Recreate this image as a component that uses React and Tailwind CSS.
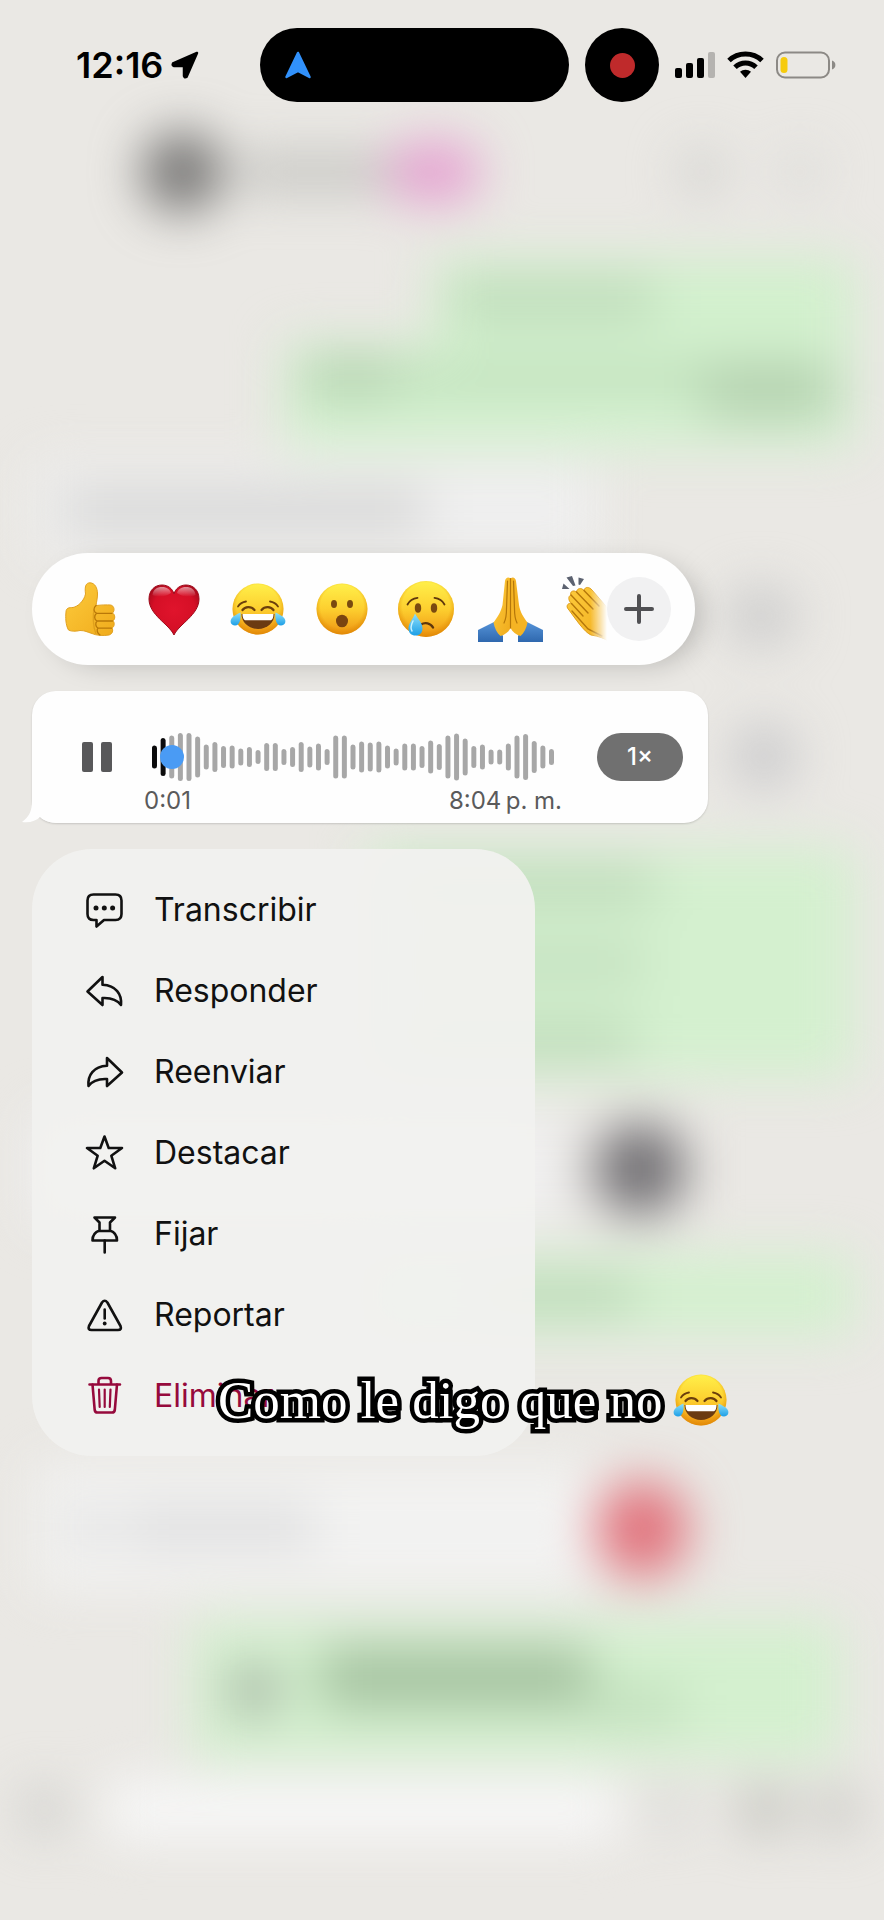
import React, { useState } from "react";

const WAVE = [
  23, 38, 43, 48, 48, 41, 25, 30, 22, 23, 17, 20, 14, 28, 28, 16, 20, 30, 21, 27,
  16, 43, 43, 25, 31, 29, 31, 23, 17, 27, 27, 22, 33, 26, 43, 47, 37, 22, 25, 15,
  15, 27, 43, 46, 32, 23, 16,
];

function EmojiDefs() {
  return (
    <svg width="0" height="0" className="absolute" aria-hidden="true">
      <defs>
        <linearGradient id="face" x1="0" y1="0" x2="0" y2="1">
          <stop offset="0" stopColor="#fff04a" />
          <stop offset="0.5" stopColor="#fdcf2f" />
          <stop offset="1" stopColor="#ee9412" />
        </linearGradient>
        <radialGradient id="rim" cx="0.5" cy="0.45" r="0.56">
          <stop offset="0.75" stopColor="#e08a00" stopOpacity="0" />
          <stop offset="1" stopColor="#d98200" stopOpacity="0.7" />
        </radialGradient>
        <linearGradient id="tear" x1="0" y1="0" x2="0" y2="1">
          <stop offset="0" stopColor="#8fe0fb" />
          <stop offset="1" stopColor="#1d9fe6" />
        </linearGradient>
        <radialGradient id="heart" cx="0.5" cy="0.5" r="0.6">
          <stop offset="0" stopColor="#e0142c" />
          <stop offset="0.7" stopColor="#d50f26" />
          <stop offset="1" stopColor="#a80a1c" />
        </radialGradient>
        <linearGradient id="shine" x1="0" y1="0" x2="0" y2="1">
          <stop offset="0" stopColor="#fff" stopOpacity="0.55" />
          <stop offset="1" stopColor="#fff" stopOpacity="0" />
        </linearGradient>
        <linearGradient id="skin" x1="0" y1="0" x2="1" y2="1">
          <stop offset="0" stopColor="#fdcb3c" />
          <stop offset="1" stopColor="#f0ab1c" />
        </linearGradient>
        <linearGradient id="sleeve" x1="0" y1="0" x2="0" y2="1">
          <stop offset="0" stopColor="#5593d8" />
          <stop offset="1" stopColor="#2f68ae" />
        </linearGradient>
      </defs>
    </svg>
  );
}

function Face({ r = 25.5 }) {
  return (
    <>
      <circle cx="34" cy="34" r={r} fill="url(#face)" />
      <circle cx="34" cy="34" r={r} fill="url(#rim)" />
    </>
  );
}

function ThumbsUp() {
  return (
    <>
      <path
        d="M10 37C10 33 13 32.500 17 32.500C22 31.500 28 26 29.500 19C28.500 11 30 7.800 34 7.800C39 8 41.500 13 41.500 19C41.500 23 40.500 27 40 30.500C45 30 51 29.700 54.500 30C58.500 30.600 59 36 56.500 38C59.500 39.500 59.300 44.500 57 45.800C59 47.500 58.500 52 56 53C57.500 55.500 56.500 59 53 60C48 61 40 60.500 36 58.500C31 57 29 55.500 24 55.500C20 56.500 15 56.500 12.500 55C9.500 50 9.500 42 10 37Z"
        fill="url(#skin)"
        stroke="#e0a020"
        strokeWidth="1"
      />
      <path
        d="M40 30.500C37 33 37.500 37 40.500 38.300H56M40.500 38.300C38 40.500 38 44.500 41 46H56.500M41 46C39 48 39.500 52 42 53.200H55.500M42 53.200C40.500 55 41 58 44 60"
        fill="none"
        stroke="#b97808"
        strokeWidth="1.300"
        strokeLinecap="round"
      />
      <path d="M38.500 33C36.500 40 37 52 40 59" fill="none" stroke="#c98a12" strokeWidth="1.300" opacity="0.5" />
    </>
  );
}

function Heart() {
  return (
    <>
      <path
        d="M34 60C29 49 9 40 9 24C9 15 15 10 22 10C28 10 32.500 13.500 34 19C35.500 13.500 40 10 46 10C53 10 59 15 59 24C59 40 39 49 34 60Z"
        fill="url(#heart)"
        stroke="#9c0a1a"
        strokeWidth="1"
      />
      <path d="M12.500 20C13 14.500 17 12 22 12C27 12 30 14.500 31 18C26 22 17 23 12.500 20Z" fill="url(#shine)" />
      <path d="M37 18C38 14.500 41 12 46 12C51 12 55 14.500 55.500 20C51 23 42 22 37 18Z" fill="url(#shine)" />
    </>
  );
}

function Joy() {
  return (
    <>
      <Face />
      <g fill="none" stroke="#6b3e0c" strokeLinecap="round">
        <path d="M14 31.500C16 28.500 18.500 27 22 26.500" strokeWidth="1.800" />
        <path d="M54 31.500C52 28.500 49.500 27 46 26.500" strokeWidth="1.800" />
        <path d="M18.500 35C21 31.500 27 31 30.500 35" strokeWidth="2.200" />
        <path d="M49.500 35C47 31.500 41 31 37.500 35" strokeWidth="2.200" />
      </g>
      <path d="M17.500 39H50.500C50.500 47.500 43 54 34 54C25 54 17.500 47.500 17.500 39Z" fill="#6b3b12" />
      <path d="M18.500 39H49.500C49.500 42.500 48.500 44.500 47 45.300H21C19.500 44.500 18.500 42.500 18.500 39Z" fill="#fff" />
      <path d="M16.500 37.500C17 44 16 50.500 11 50.500C7 50.500 5.500 46.500 7.500 43.500C9.500 40.500 13 39.500 16.500 37.500Z" fill="url(#tear)" />
      <path d="M51.500 37.500C51 44 52 50.500 57 50.500C61 50.500 62.500 46.500 60.500 43.500C58.500 40.500 55 39.500 51.500 37.500Z" fill="url(#tear)" />
    </>
  );
}

function Wow() {
  return (
    <>
      <Face />
      <ellipse cx="26" cy="29" rx="3" ry="4" fill="#7a4a10" />
      <ellipse cx="42" cy="29" rx="3" ry="4" fill="#7a4a10" />
      <ellipse cx="34" cy="46" rx="6" ry="6.300" fill="#7a4410" />
    </>
  );
}

function Cry() {
  return (
    <>
      <Face r={28} />
      <ellipse cx="26" cy="33" rx="3.200" ry="4.800" fill="#7a4a10" />
      <ellipse cx="42" cy="33" rx="3.200" ry="4.800" fill="#7a4a10" />
      <g fill="none" stroke="#5e370c" strokeLinecap="round">
        <path d="M15.500 29.500C17.500 25.500 21 23.300 25.500 22.800" strokeWidth="1.800" />
        <path d="M52.500 29.500C50.500 25.500 47 23.300 42.500 22.800" strokeWidth="1.800" />
        <path d="M29 49.500C33 47 38.500 48 41 52.500" strokeWidth="2.400" />
      </g>
      <path d="M23 38.500C26 44 30.500 48 30.500 53.500C30.500 58 27.500 60.500 23.500 60.500C19.500 60.500 16.500 58 16.500 53.500C16.500 48 21 44 23 38.500Z" fill="url(#tear)" />
      <path d="M21 46C19 50 18 53 20 56" fill="none" stroke="#c9f2ff" strokeWidth="1.500" strokeLinecap="round" />
    </>
  );
}

function Pray() {
  return (
    <>
      <path d="M2 55L18 47L27 61V67H2Z" fill="url(#sleeve)" />
      <path d="M67 55L51 47L42 61V67H67Z" fill="url(#sleeve)" />
      <path d="M34.500 3.500C32 1.500 29.500 3 29 6L26.500 30C25 37 21 43 17.500 47.500C18.500 53 21 58 24.500 61C29 59.500 32.500 57 34.500 53Z" fill="url(#skin)" />
      <path d="M34.500 3.500C37 1.500 39.500 3 40 6L43 30C44 37 48 43 51.500 47.500C50.500 53 48 58 44.500 61C40 59.500 36.500 57 34.500 53Z" fill="#f5b424" />
      <path d="M34.500 3.500V53M31.500 6L30.500 34C30.500 40 30 44 28 48M37.500 6L38.500 34C38.500 40 39 44 41 48" fill="none" stroke="#b5770a" strokeWidth="1.200" strokeLinecap="round" />
    </>
  );
}

function Clap() {
  return (
    <>
      <path d="M2 14L3.500 8.500L9.500 14ZM6.500 2.500L12 1L15.500 10.500L13 11ZM18.500 2.500L24 4L20 10L18.500 9.500Z" fill="#5c6270" />
      <path
        d="M7.500 33C6 30 9 27.500 11.500 28.500C8 25.500 8 21 11 20C9.500 17 13 14.500 16.500 17C17 13 21.500 12.500 24 15.500C25 11 29.500 12 32 15L45 30C54 41 58 52 58 60L50 67C45 63.500 38 61 31 60C24 57 15 43 7.500 33Z"
        fill="url(#skin)"
        stroke="#dd9c18"
        strokeWidth="1"
      />
      <path d="M11.500 28.500L23 41M11 20L28 38M16.500 17L33 34M24 15.500L39 31M12 36L28 54L42 61" fill="none" stroke="#b5770a" strokeWidth="1.400" strokeLinecap="round" />
    </>
  );
}

const REACTIONS = [
  { label: "👍", Art: ThumbsUp },
  { label: "❤️", Art: Heart },
  { label: "😂", Art: Joy },
  { label: "😮", Art: Wow },
  { label: "😢", Art: Cry },
  { label: "🙏", Art: Pray },
  { label: "👏", Art: Clap },
];

const ICONS = {
  transcribe: (
    <>
      <path d="M9.500 4.500H31.500Q37.500 4.500 37.500 10.500V24Q37.500 30 31.500 30H20L12.500 36.500V30H9.500Q3.500 30 3.500 24V10.500Q3.500 4.500 9.500 4.500Z" />
      <g fill="currentColor" stroke="none">
        <circle cx="12" cy="18" r="2.500" />
        <circle cx="20.300" cy="18" r="2.500" />
        <circle cx="28.600" cy="18" r="2.500" />
      </g>
    </>
  ),
  reply: <path d="M18.500 6L3.500 20.500L18.500 34V27C28 26.500 33 28.500 37 34C38 23 32 14.500 18.500 13.800Z" />,
  forward: <path d="M23 6L38 20.500L23 34V27C13.500 26.500 8.500 28.500 4.500 34C3.500 23 9.500 14.500 23 13.800Z" />,
  star: <path d="M20.500 3.500L24.700 15H38L27.300 22.700L31.200 35.300L20.500 27.800L9.800 35.300L13.700 22.700L3 15H16.300Z" />,
  pin: (
    <>
      <path d="M10.500 3.500H31L26 8.500V16.500C30.500 18 33 21.500 33 26.500H8.500C8.500 21.500 11 18 15.500 16.500V8.500Z" />
      <path d="M15.500 17H26M20.700 26.500V38.500" />
    </>
  ),
  report: (
    <>
      <path d="M18 7.500Q20.700 4 23.400 7.500L36.500 31Q38 35 34 35H7.500Q3.500 35 5 31Z" />
      <path d="M20.700 14.500V23.500" />
      <circle cx="20.700" cy="28.500" r="1.900" fill="currentColor" stroke="none" />
    </>
  ),
  trash: (
    <>
      <path d="M5.500 8.500H36M14.500 8.500V5Q14.500 2 17.500 2H24Q27 2 27 5V8.500" />
      <path d="M8.500 8.500L10.700 34Q11 36.500 13.500 36.500H28Q30.500 36.500 30.800 34L33 8.500" />
      <path d="M15 13.500L15.700 31M20.700 13.500V31M26.500 13.500L25.800 31" strokeWidth="2.200" />
    </>
  ),
};

const MENU = [
  { icon: "transcribe", label: "Transcribir" },
  { icon: "reply", label: "Responder" },
  { icon: "forward", label: "Reenviar" },
  { icon: "star", label: "Destacar" },
  { icon: "pin", label: "Fijar" },
  { icon: "report", label: "Reportar" },
  { icon: "trash", label: "Eliminar", danger: true },
];

// Out-of-focus conversation that stays behind the open menu
function ChatBackdrop() {
  return (
    <div className="absolute inset-0 overflow-hidden" aria-hidden="true">
      <div className="flex flex-col blur-[25px]">
        <div className="mt-[132px] flex h-[80px] items-center pl-[142px] pr-[64px]">
          <div className="size-[80px] rounded-full bg-[#747372]" />
          <div className="ml-4 h-9 w-[150px] bg-[#c3c3bf]" />
          <div className="h-[58px] w-[92px] rounded-full bg-[#e59fd0]" />
          <div className="ml-auto size-11 rounded-full bg-[#d0d0cd]" />
          <div className="ml-14 size-10 rounded-full bg-[#d9d9d6]" />
        </div>

        <div className="mr-[30px] mt-[46px] flex h-[84px] w-[420px] items-center self-end bg-[#d2f0cd] pl-5">
          <div className="h-9 w-[200px] bg-[#bbd8b7]" />
        </div>
        <div className="mr-[30px] flex h-[106px] w-[570px] items-start self-end bg-[#d4f1d0] px-5 pt-4">
          <div className="h-10 w-[90px] bg-[#b4d1af]" />
          <div className="mt-1 h-8 flex-1 bg-[#bfdfba]" />
          <div className="mt-1 h-14 w-[130px] bg-[#b4d1af]" />
        </div>

        <div className="ml-9 mt-4 flex h-[92px] w-[560px] items-center bg-[#efefef] pl-7">
          <div className="h-8 w-[360px] bg-[#cfcfce]" />
        </div>
        <div className="mr-[88px] mt-8 h-[56px] w-[70px] self-end rounded-full bg-[#cbcbcb]" />
        <div className="mr-[88px] mt-20 h-[64px] w-[64px] self-end rounded-full bg-[#c9c9cb]" />

        <div className="mr-[30px] mt-[60px] flex h-[230px] w-[490px] flex-col justify-between self-end bg-[#d4f0cf] py-6 pl-10">
          <div className="h-7 w-[250px] bg-[#b6d3b2]" />
          <div className="h-7 w-[240px] bg-[#bddab9]" />
          <div className="h-7 w-[230px] bg-[#b6d3b2]" />
        </div>
        <div className="ml-9 mt-9 flex h-[110px] w-[650px] items-center justify-end bg-linear-to-r from-[#f1f1f2] from-75% to-[#eae8e4] to-85%">
          <div className="size-[92px] rounded-full bg-[#716f73]" />
        </div>
        <div className="mr-[30px] mt-[30px] flex h-[82px] w-[490px] items-center self-end bg-[#d4f0cf] pl-[120px]">
          <div className="h-8 w-[150px] bg-[#b8d5b4]" />
        </div>

        <div className="ml-9 mt-[128px] flex h-[126px] items-center">
          <div className="flex h-full w-[560px] items-center gap-5 bg-[#f2f2f1] pl-8">
            <div className="size-9 rounded-full bg-[#d9d9da]" />
            <div className="h-10 w-[190px] bg-[#dededf]" />
          </div>
          <div className="mt-1 h-[96px] w-[92px] rounded-full bg-[#e1727c]" />
        </div>

        <div className="mr-[44px] mt-[30px] flex h-[140px] w-[648px] items-center self-end bg-[#d4f0cf] pl-9">
          <div className="size-[52px] rounded-full bg-[#a4b1a2]" />
          <div className="mb-6 ml-10 h-[60px] w-[270px] bg-[#a5c2a0]" />
          <div className="mt-8 h-8 w-[90px] bg-[#bddbb8]" />
        </div>

        <div className="mt-5 flex h-[60px] items-center pl-5 pr-6">
          <div className="size-12 rounded-full bg-[#cfcfcc]" />
          <div className="ml-10 h-[60px] w-[510px] bg-[#f7f7f7]" />
          <div className="ml-8 size-10 rounded-full bg-[#d7d8d5]" />
          <div className="ml-auto size-12 rounded-full bg-[#bdbeb7]" />
          <div className="ml-6 size-12 rounded-full bg-[#c8c8c3]" />
        </div>
      </div>
    </div>
  );
}

function StatusBar() {
  return (
    <header className="flex items-center pl-[76px] pr-[48px] pt-7 text-black">
      <div className="flex flex-1 items-center gap-2">
        <span className="text-[36px] font-semibold leading-none">12:16</span>
        <svg className="size-[28px]" viewBox="0 0 28 28" aria-hidden="true">
          <path d="M26 2L2 12.500Q1 14.500 3 15H13V25Q13.500 27 15.500 26Z" fill="#000" stroke="#000" strokeWidth="2.500" strokeLinejoin="round" />
        </svg>
      </div>

      <div className="flex h-[74px] w-[309px] items-center rounded-full bg-black pl-6">
        <svg className="size-[28px]" viewBox="0 0 28 28" aria-hidden="true">
          <path d="M14 2L25.500 26L14 20L2.500 26Z" fill="#3191fb" stroke="#3191fb" strokeWidth="2.500" strokeLinejoin="round" />
        </svg>
      </div>
      <div className="ml-4 flex size-[74px] items-center justify-center rounded-full bg-black">
        <div className="size-[25px] rounded-full bg-[#bf2a2b]" />
      </div>

      <div className="ml-4 flex items-end gap-1" role="img" aria-label="Señal">
        <div className="h-[10px] w-[7px] rounded-[2px] bg-black" />
        <div className="h-[15px] w-[7px] rounded-[2px] bg-black" />
        <div className="h-[20px] w-[7px] rounded-[2px] bg-black" />
        <div className="h-[26px] w-[7px] rounded-[2px] bg-[#b5b3b0]" />
      </div>
      <svg className="ml-3 h-[28px] w-[37px]" viewBox="0 0 37 28" role="img" aria-label="Wi-Fi">
        <g fill="none" stroke="#000" strokeWidth="5">
          <path d="M2 9.500C11 0.800 26 0.800 35 9.500" />
          <path d="M8 16.300C14 10.500 23 10.500 29 16.300" />
        </g>
        <path d="M13 20.800C16 18 21 18 24 20.800L18.500 27Z" fill="#000" />
      </svg>
      <svg className="ml-3 h-[28px] w-[60px]" viewBox="0 0 60 28" role="img" aria-label="Batería">
        <rect x="1" y="1.500" width="52" height="25" rx="8" fill="none" stroke="#8c8985" strokeWidth="2" />
        <rect x="4.500" y="6" width="7" height="16" rx="3.500" fill="#f6cb0c" />
        <path d="M56 9.500C60.500 11 60.500 17 56 18.500Z" fill="#8c8985" />
      </svg>
    </header>
  );
}

function ReactionBar() {
  return (
    <div className="flex h-28 w-[663px] max-w-full items-center rounded-full bg-[#fefefe] pl-4 pr-6 shadow-[12px_6px_28px_-8px_rgba(0,0,0,0.22)]">
      <div className="flex min-w-0 flex-1 overflow-hidden [mask-image:linear-gradient(to_right,#000_97%,transparent)]">
        {REACTIONS.map(({ label, Art }) => (
          <button key={label} type="button" aria-label={label} className="flex w-[84px] shrink-0 justify-center">
            <svg className="size-[68px]" viewBox="0 0 68 68" aria-hidden="true">
              <Art />
            </svg>
          </button>
        ))}
      </div>
      <button type="button" aria-label="Más reacciones" className="flex size-16 shrink-0 items-center justify-center rounded-full bg-[#f1f1f2]">
        <svg className="size-[32px]" viewBox="0 0 32 32" aria-hidden="true">
          <path d="M16 3V29M3 16H29" stroke="#505053" strokeWidth="4" strokeLinecap="round" />
        </svg>
      </button>
    </div>
  );
}

function VoiceMessage() {
  const [progress, setProgress] = useState(2);
  const played = (progress / 100) * 379 + 12;

  return (
    <div className="relative flex w-[676px] max-w-full items-center rounded-3xl bg-[#fefefe] py-0.5 pl-[50px] pr-[25px] shadow-[0_1px_2px_rgba(0,0,0,0.15)]">
      <svg className="absolute -left-[10px] bottom-0 h-[34px] w-[44px]" viewBox="0 0 44 34" aria-hidden="true">
        <path d="M10 0V12C10 22 7 28 0 33C8 34 14 32 18 28C23 33 30 34 44 34V0Z" fill="#fefefe" />
      </svg>
      <button type="button" aria-label="Pausar" className="flex h-[30px] w-[30px] justify-between">
        <span className="h-full w-[11px] rounded-[2px] bg-[#58585a]" />
        <span className="h-full w-[11px] rounded-[2px] bg-[#58585a]" />
      </button>

      <div className="ml-8 w-[418px] pt-10">
        <div className="relative mx-2 h-12">
          <svg className="h-12 w-full" viewBox="0 0 403 48" preserveAspectRatio="none" aria-hidden="true">
            {WAVE.map((h, i) => {
              const x = (i * 398) / (WAVE.length - 1);
              return (
                <rect key={i} x={x} y={24 - h / 2} width="5" height={h} rx="2.500" fill={x + 5 < played ? "#0b0b0c" : "#a7a7a7"} />
              );
            })}
          </svg>
          <input
            type="range"
            min="0"
            max="100"
            aria-label="Posición del audio"
            value={progress}
            onChange={(e) => setProgress(Number(e.target.value))}
            className="absolute inset-0 m-0 h-full w-full appearance-none bg-transparent [&::-webkit-slider-thumb]:size-6 [&::-webkit-slider-thumb]:appearance-none [&::-webkit-slider-thumb]:rounded-full [&::-webkit-slider-thumb]:bg-[#4a9bf4]"
          />
        </div>
        <div className="flex h-10 items-center justify-between text-[24px] leading-none text-[#5a5a5b]">
          <span>0:01</span>
          <span>8:04{"\u202f"}p. m.</span>
        </div>
      </div>

      <button type="button" className="ml-auto h-12 w-[86px] rounded-full bg-[#707070] text-[24px] font-medium leading-none text-white">
        1×
      </button>
    </div>
  );
}

function ContextMenu() {
  return (
    <nav className="w-[503px] max-w-full rounded-[60px] bg-[#f1f1ef]/95 py-5">
      {MENU.map(({ icon, label, danger }) => (
        <button
          key={label}
          type="button"
          className={`flex h-[81px] w-full items-center gap-[30px] pl-[52px] text-left text-[32px] leading-none ${
            danger ? "text-[#960a3c]" : "text-[#111111]"
          }`}
        >
          <svg
            className="size-10"
            viewBox="0 0 40 40"
            fill="none"
            stroke="currentColor"
            strokeWidth="2.600"
            strokeLinecap="round"
            strokeLinejoin="round"
            aria-hidden="true"
          >
            {ICONS[icon]}
          </svg>
          {label}
        </button>
      ))}
    </nav>
  );
}

export default function App() {
  return (
    <div className="relative min-h-screen overflow-hidden bg-[#eae8e4] font-['Inter','Liberation_Sans',sans-serif]">
      <EmojiDefs />
      <ChatBackdrop />
      <div className="relative">
        <StatusBar />
        <main className="mt-[451px] flex flex-col items-start gap-[26px] px-8 pb-[463px]">
          <ReactionBar />
          <VoiceMessage />
          <ContextMenu />
        </main>
        <p className="absolute left-[218px] top-[1366px] flex items-center gap-1 whitespace-nowrap font-['Liberation_Serif',serif] text-[53px] leading-[64px] text-white">
          <span className="[-webkit-text-stroke:9px_black] [paint-order:stroke_fill] [stroke-linejoin:round]">
            Como le digo que no
          </span>
          <svg className="size-[68px]" viewBox="0 0 68 68" role="img" aria-label="😂">
            <Joy />
          </svg>
        </p>
      </div>
    </div>
  );
}
